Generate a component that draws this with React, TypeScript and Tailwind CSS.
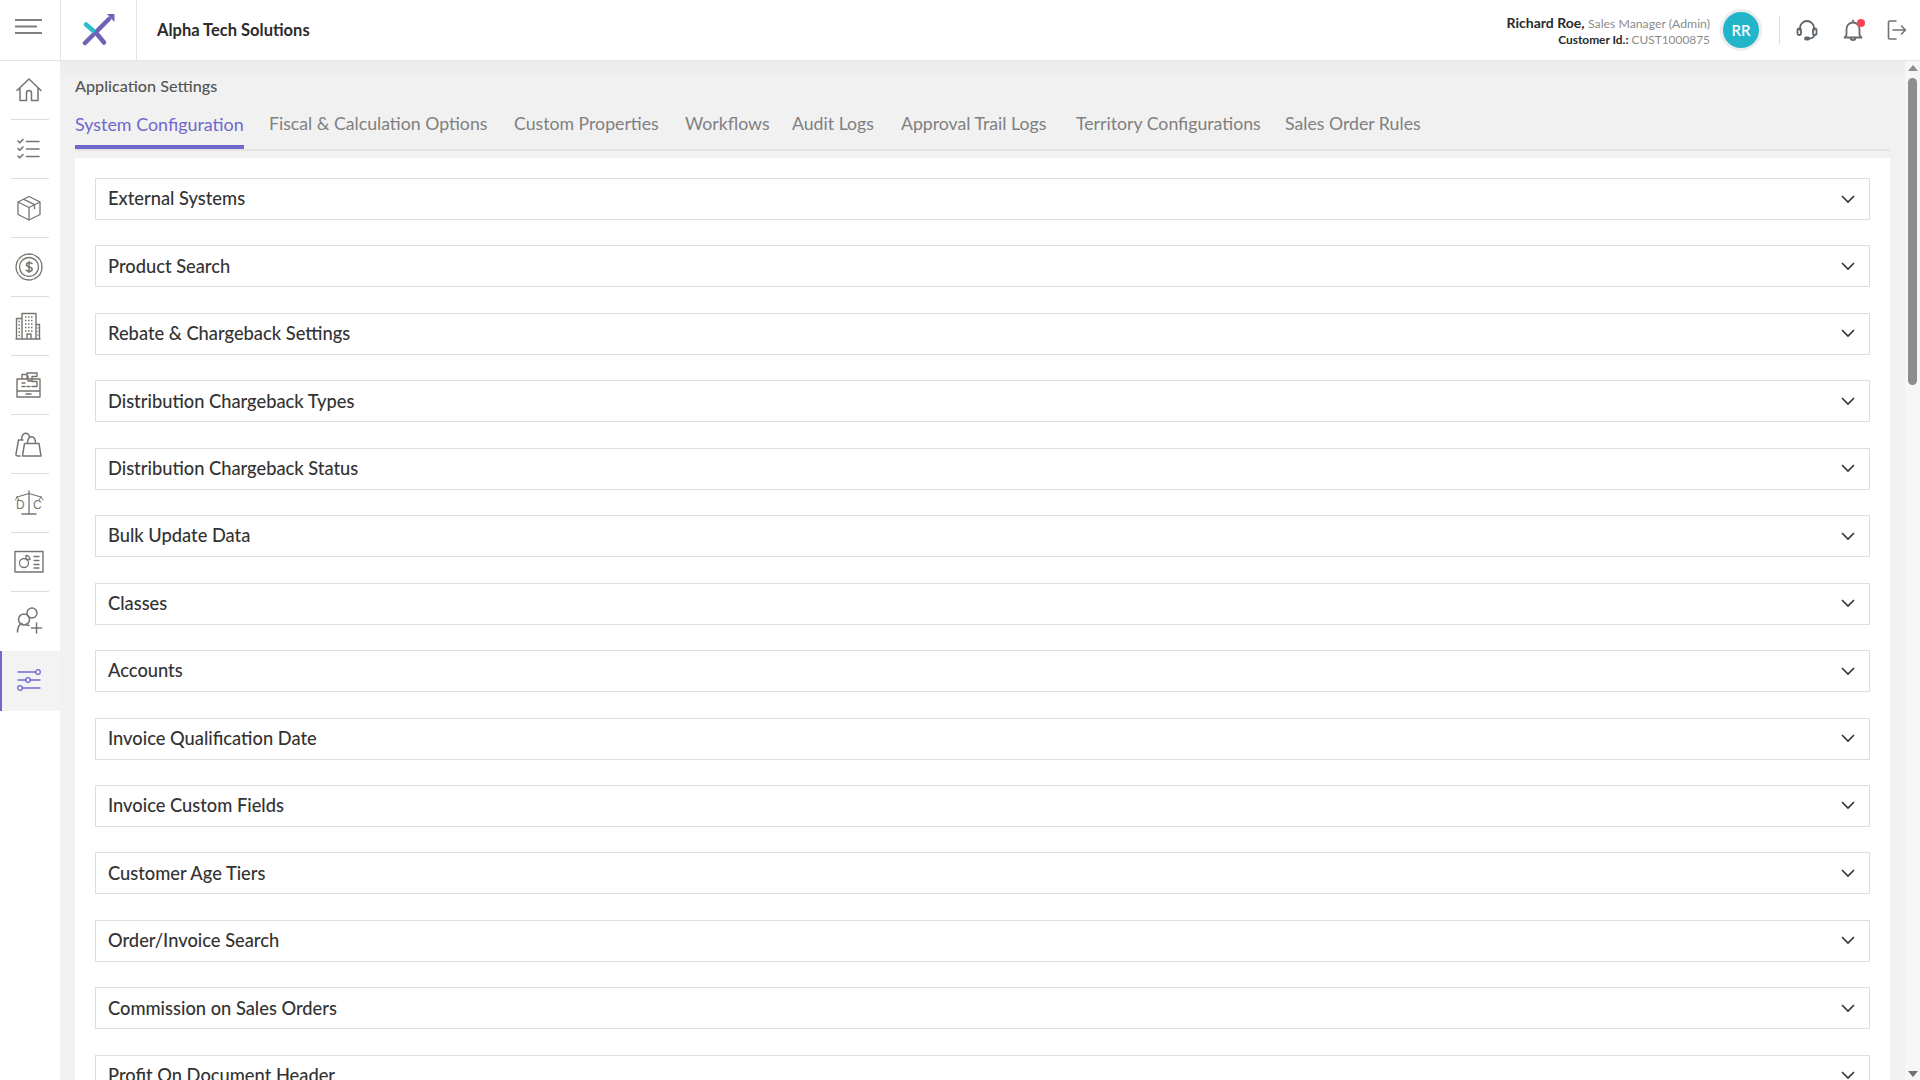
import React from "react";

const rows = ["External Systems","Product Search","Rebate & Chargeback Settings","Distribution Chargeback Types","Distribution Chargeback Status","Bulk Update Data","Classes","Accounts","Invoice Qualification Date","Invoice Custom Fields","Customer Age Tiers","Order/Invoice Search","Commission on Sales Orders","Profit On Document Header"];
const tabs = [
  { t: "System Configuration", w: "w-[169px]" },
  { t: "Fiscal & Calculation Options", w: "w-[220px]" },
  { t: "Custom Properties", w: "w-[146px]" },
  { t: "Workflows", w: "w-[82px]" },
  { t: "Audit Logs", w: "w-[84px]" },
  { t: "Approval Trail Logs", w: "w-[150px]" },
  { t: "Territory Configurations", w: "w-[184px]" },
  { t: "Sales Order Rules", w: "w-[142px]" },
];

const S = ({ children, c = "#77736f", w = 1.3 }: { children: React.ReactNode; c?: string; w?: number }) => (
  <svg width="30" height="30" viewBox="0 0 30 30" fill="none" stroke={c} strokeWidth={w} strokeLinecap="round" strokeLinejoin="round">{children}</svg>
);

const icons: React.ReactNode[] = [
  <S w={1.5}><path d="M3 15.500 15 4l12 11.500M6 13v12.500h6.500V18a2.500 2.500 0 0 1 5 0v7.500H24V13" /></S>,
  <S w={1.6}><path d="m4 7 1.800 1.800L9 5.500M4 14.500l1.800 1.800L9 13M4 22l1.800 1.800L9 20.500M12.500 7.500H25M12.500 15H25M12.500 22.500H25" /></S>,
  <S><path d="M15 3.500 26 9v12.500L15 27 4 21.500V9zM4 9l11 5.500L26 9M15 14.500V27M9.500 6.200l11 5.500v4" /></S>,
  <S><circle cx="15" cy="15" r="13" strokeDasharray="15 1.500" /><circle cx="15" cy="15" r="9.500" /><path d="M18 11.500c-1-1-5.500-1.500-5.500 1.200 0 3 5.700 1.500 5.700 4.500 0 2.600-4.700 2.300-6 1M15 9.500v11" strokeWidth="1.500" /></S>,
  <S w={1.4}>
    <path d="M8 28V2.500h14V28M8 7.500H2.500V28H8M22 13.500h3.500V28H22M2 28h24M13 28v-5h4v5" />
    <path d="M11 6h8M11 9.500h8M11 13h8M11 16.500h8M11 20h8M4.500 10.500h2M4.500 14h2M4.500 17.500h2M4.500 21h2M4.500 24.500h2M23.500 17h1M23.500 20.500h1M23.500 24h1" strokeDasharray="1.500 1.500" strokeLinecap="butt" />
  </S>,
  <S w={1.4}><path d="M8 9V4.500h5V9M13 6V3h10v3.500h-5V11h-4V6M3 9h23v18H3zM3 21h23M8 13h3M8 16.500h3M13 16.500h3M18 11.500h5v5h-5M12 24h5" /></S>,
  <S w={1.5}><path d="M6 27H4c-1.500 0-2.200-.8-2-2L4.500 11H9M7.500 11c0-8 7-9 8-3M10.500 14.500h14.500L27 27H8.500zM13.500 14.500c0-9 8-9 8 0" /></S>,
  <S w={1.3}>
    <path d="M15 3v23M8 26h14M3 9 15 5.500 27 9" />
    <path d="M3 9 1.500 12M3 9 5 12M27 9l-2 3M27 9l2 3" strokeWidth="1" />
    <text x="2" y="20.500" fontSize="12" fill="#77736f" stroke="none" fontFamily="Liberation Sans, sans-serif">D</text>
    <text x="19" y="20.500" fontSize="12" fill="#77736f" stroke="none" fontFamily="Liberation Sans, sans-serif">C</text>
  </S>,
  <S><rect x="1" y="4.500" width="28" height="20.500" strokeWidth="1.400" /><circle cx="10" cy="16" r="4.500" /><path d="M12 8.500a4 4 0 0 1 4 4h-4zM20 9.500h5M20 13.500h5M20 17.500h5M20 21h5" /></S>,
  <S w={1.500}><circle cx="18" cy="7" r="5" /><circle cx="10" cy="13.500" r="5.500" /><path d="M3.500 26c0-5 2-7.500 4.500-8.500M12 18.500c1 .5 2 1 3 1M22.500 17v10M17.500 22h10" /></S>,
  <S c="#716bd1" w={1.300}><path d="M4 6h18M4 14h8M16 14h10M8 22h18" /><circle cx="24" cy="6" r="2.300" /><circle cx="14" cy="14" r="2.300" /><circle cx="6" cy="22" r="2.300" /></S>,
];

export default function App() {
  return (
    <div className="h-[1080px] w-[1920px] overflow-hidden flex flex-col bg-white text-[#333] font-['Lato','Liberation_Sans',sans-serif]">
      <header className="h-[61px] shrink-0 flex bg-white border-b border-[#e4e4e4] relative z-10">
        <div className="w-[61px] border-r border-[#e4e4e4] flex items-center pl-[15px] pb-[7px]">
          <svg width="27" height="18" viewBox="0 0 27 18" fill="none" stroke="#808080" strokeWidth="2"><path d="M0 2h27M0 8.500h22M0 15h27" /></svg>
        </div>
        <div className="w-[76px] border-r border-[#e4e4e4] flex items-center justify-center">
          <svg width="34" height="34" viewBox="0 0 34 34" fill="none" strokeWidth="4.500" strokeLinecap="round">
            <path d="M3 30 27 6" stroke="#6e62b5" />
            <path d="M25 1h7.500v8z" fill="#6e62b5" stroke="none" />
            <path d="m15 21 7 8.500" stroke="#6e62b5" />
            <path d="M4 11.500l7 6" stroke="#2dbccd" />
          </svg>
        </div>
        <div className="flex items-center pl-5 text-[16.500px] font-bold text-[#2c2c2c]">Alpha Tech Solutions</div>
        <div className="ml-auto flex items-center">
          <div className="text-right leading-[16px] pt-[2px]">
            <div className="text-[14px]"><span className="font-bold text-[#2a2a2a]">Richard Roe,</span> <span className="text-[12.250px] text-[#8b8b8b]">Sales Manager (Admin)</span></div>
            <div className="text-[11.900px]"><span className="font-bold text-[#2a2a2a]">Customer Id.:</span> <span className="text-[#8b8b8b]">CUST1000875</span></div>
          </div>
          <div className="ml-[10px] w-[42px] h-[42px] rounded-full border-[3px] border-[#ececec] bg-[#22b5c9] flex items-center justify-center text-white text-[15px] font-semibold">RR</div>
          <div className="ml-[17px] w-px h-[28px] bg-[#dcdcdc]" />
          <div className="ml-[15px]">
            <svg width="24" height="24" viewBox="0 0 24 24" fill="none" stroke="#5e666c" strokeWidth="1.800" strokeLinecap="round"><path d="M5 12V10a7 7 0 0 1 14 0v2M19 17c0 2-2 3.500-5 3.500" /><rect x="2.500" y="10.500" width="3.500" height="6.500" rx="1.700" /><rect x="18" y="10.500" width="3.500" height="6.500" rx="1.700" /><rect x="10" y="19.500" width="4" height="2" rx="1" /></svg>
          </div>
          <div className="ml-[22px] relative">
            <svg width="24" height="24" viewBox="0 0 24 24" fill="none" stroke="#6a6a6a" strokeWidth="1.800" strokeLinecap="round" strokeLinejoin="round"><path d="M12 2.500v2M5.500 17V11a6.500 6.500 0 0 1 13 0v6l2 2.500h-17zM9.500 19.500c0 3.500 5 3.500 5 0" /></svg>
            <span className="absolute top-[1px] right-0 w-2 h-2 rounded-full bg-[#f84452]" />
          </div>
          <div className="ml-[22px] mr-[13px]">
            <svg width="20" height="22" viewBox="0 0 20 22" fill="none" stroke="#727272" strokeWidth="1.600" strokeLinecap="round" strokeLinejoin="round"><path d="M9 2H2.500a1 1 0 0 0-1 1v16a1 1 0 0 0 1 1H9M6 11h12.500M14.500 7l4 4-4 4" /></svg>
          </div>
        </div>
      </header>
      <div className="flex-1 flex min-h-0">
        <nav className="w-[60px] shrink-0 bg-white flex flex-col">
          {icons.map((ic, i) => (
            <div key={i} className={i === 10 ? "h-[60px] bg-[#f3f3f3] border-l-2 border-[#6f68cc] flex items-center justify-center" : "h-[59px] relative flex items-center justify-center"}>
              <span className={i === 10 ? "pr-[4px] flex" : "pr-[2px] pb-[2px] flex"}>{ic}</span>
              {i < 9 && <span className="absolute bottom-0 left-[11px] w-[38px] h-px bg-[#dcdcdc]" />}
            </div>
          ))}
        </nav>
        <main className="flex-1 min-w-0 bg-gradient-to-b from-[#ebebeb] via-[#f1f1f1] via-[20px] to-[#f1f1f1] px-[15px] overflow-hidden">
          <div className="text-[16.200px] font-medium text-[#555] h-[18px] leading-[18px] mt-[16px]">Application Settings</div>
          <div className="flex gap-[25px] h-[56px] items-start border-b-2 border-[#e5e5e5] pt-[17px]">
            {tabs.map((x, i) => (
              <div key={x.t} className={i === 0 ? `${x.w} whitespace-nowrap h-[37px] border-b-4 border-[#6f68cc] text-[#6f68cc] text-[17.900px] leading-[24px]` : `${x.w} whitespace-nowrap text-[#808080] text-[17.700px] leading-[24px]`}>{x.t}</div>
            ))}
          </div>
          <div className="bg-white mt-[7px] px-[20px] pt-[20px] h-[960px]">
            {rows.map(r => (
              <div key={r} className="h-[42px] mb-[25.440px] border border-[#dedede] flex items-center justify-between pl-[12px] pr-[14px]">
                <span className="text-[18.300px] font-medium text-[#333]">{r}</span>
                <svg width="14" height="9" viewBox="0 0 14 9" fill="none" stroke="#333" strokeWidth="1.600"><path d="m1 1 6 6 6-6" /></svg>
              </div>
            ))}
          </div>
        </main>
        <div className="w-[15px] shrink-0 bg-[#f6f6f6] flex flex-col items-center pt-[4px]">
          <span className="w-0 h-0 border-x-[5px] border-x-transparent border-b-[6px] border-b-[#8d8d8d]" />
          <div className="w-[9px] h-[307px] mt-[7px] bg-[#8d8d8d] rounded-full" />
          <div className="flex-1" />
          <span className="w-0 h-0 border-x-[5px] border-x-transparent border-t-[6px] border-t-[#707070] mb-[3px]" />
        </div>
      </div>
    </div>
  );
}
